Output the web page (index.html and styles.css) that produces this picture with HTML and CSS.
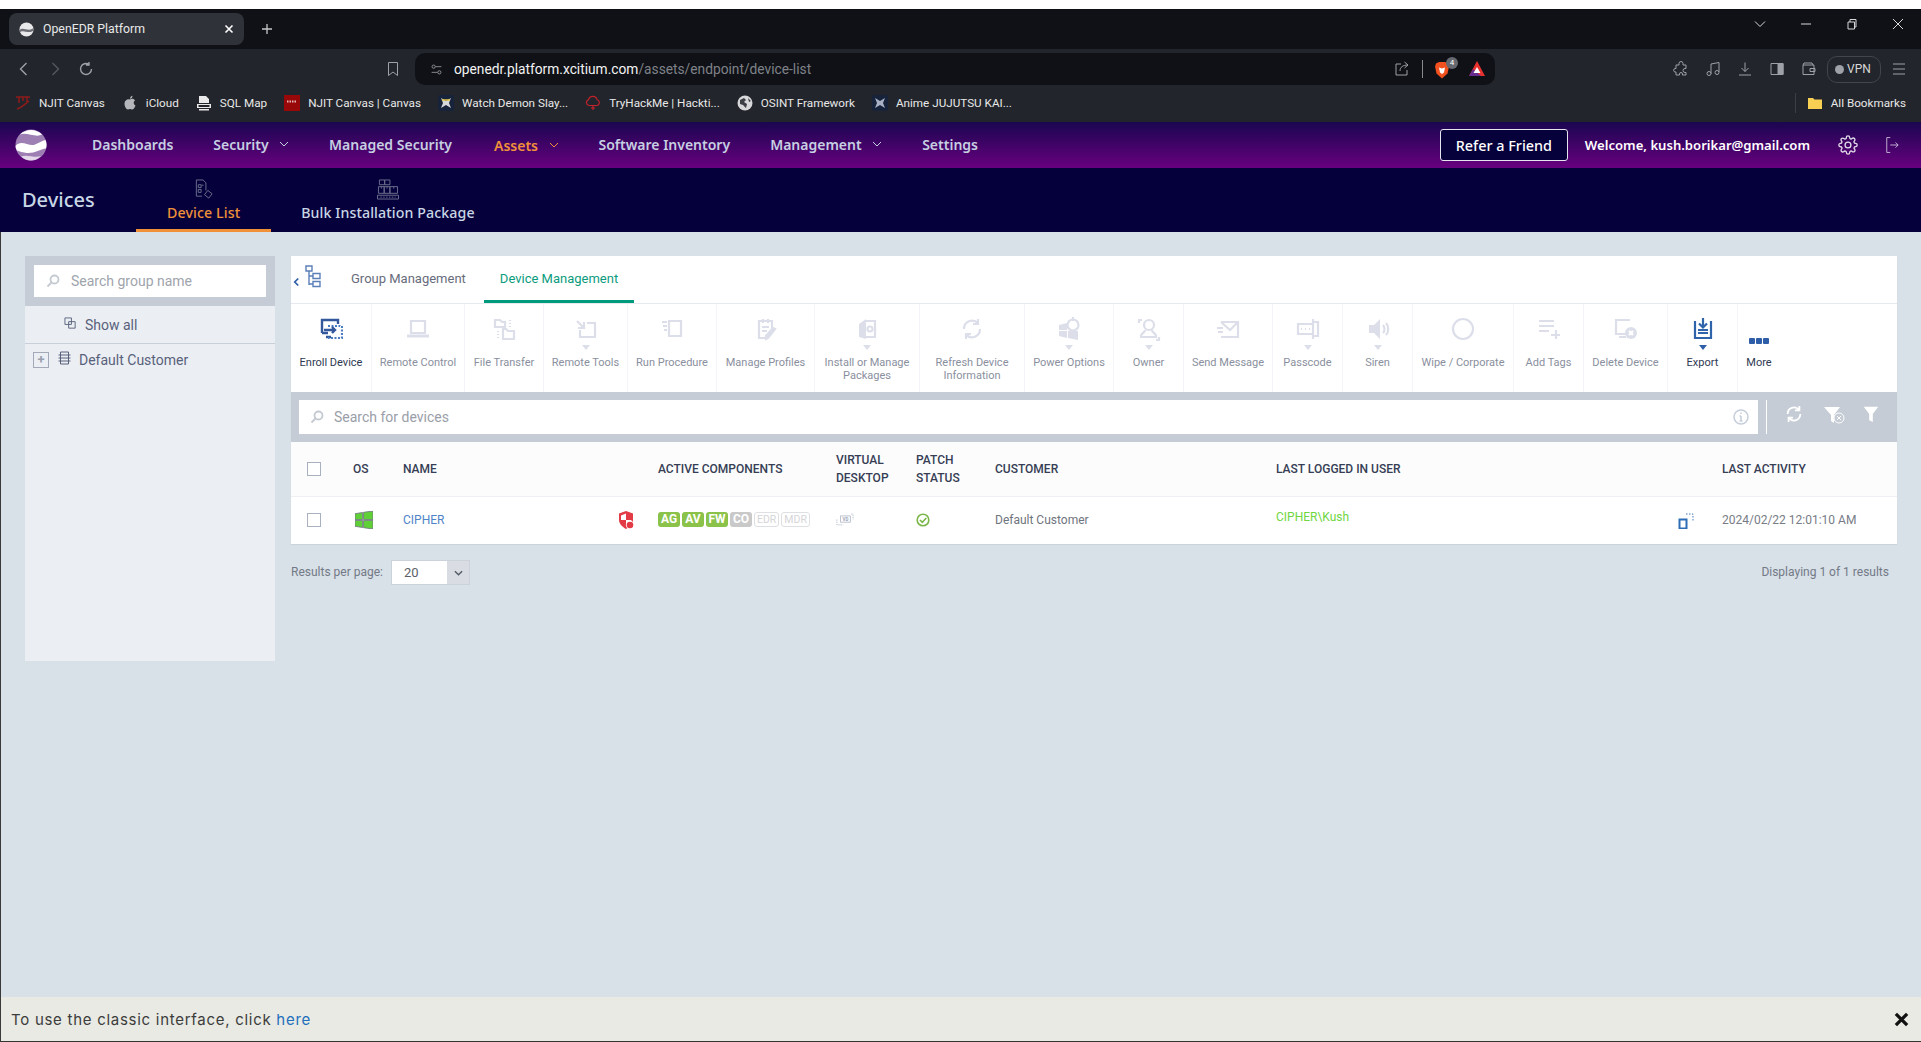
FILE: index.html
```html
<!DOCTYPE html>
<html lang="en">
<head>
  <meta charset="UTF-8">
  <title>OpenEDR Platform</title>
  <link rel="stylesheet" href="styles.css">
</head>
<body>
  <div class="top-strip"></div>

  <div class="tab-strip">
    <div class="browser-tab">
      <svg class="favicon" viewBox="0 0 32 32"><circle cx="16" cy="16" r="15" fill="#e8e8ea"/><path d="M1 17C9 9 20 22 31 13v5C21 27 9 15 2 22z" fill="#6d6d75"/></svg>
      <span class="browser-tab-title">OpenEDR Platform</span>
      <svg class="tab-close" viewBox="0 0 10 10"><path d="M1.500 1.500l7 7M8.500 1.500l-7 7"/></svg>
    </div>
    <svg class="new-tab" viewBox="0 0 12 12"><path d="M6 1v10M1 6h10"/></svg>
    <div class="window-controls">
      <svg viewBox="0 0 12 12"><path d="M1 3.500l5 5 5-5"/></svg>
      <svg viewBox="0 0 12 12"><path d="M1 6h10"/></svg>
      <svg viewBox="0 0 12 12"><path d="M2 4h6.500v7H2zM4 4V1.500h6V9H8.500"/></svg>
      <svg viewBox="0 0 12 12"><path d="M1 1l10 10M11 1L1 11"/></svg>
    </div>
  </div>

  <div class="address-row">
    <div class="nav-buttons">
      <svg viewBox="0 0 16 16"><path d="M10.500 2L4.500 8l6 6"/></svg>
      <svg class="dim" viewBox="0 0 16 16"><path d="M5.500 2l6 6-6 6"/></svg>
      <svg viewBox="0 0 16 16"><path d="M13.500 8A5.500 5.500 0 1 1 11 3.400M11 1v3h-3"/></svg>
    </div>
    <svg class="bookmark-btn" viewBox="0 0 16 16"><path d="M3.500 1.500h9v13L8 11l-4.500 3.500z"/></svg>
    <div class="address-bar">
      <svg class="site-settings" viewBox="0 0 16 16"><circle cx="4.500" cy="4.500" r="2"/><circle cx="11.500" cy="11.500" r="2"/><path d="M7 4.500h7M2 11.500h7"/></svg>
      <span class="url"><b>openedr.platform.xcitium.com</b>/assets/endpoint/device-list</span>
      <svg class="share" viewBox="0 0 16 16"><path d="M7 3H2v11h11V9M6 10c0-4 3-6 8-6M10.500 1l3.500 3-3.500 3"/></svg>
      <i class="address-sep"></i>
      <span class="brave">
        <svg viewBox="0 0 16 18"><path d="M2 2l3-1.500h6L14 2l1 3-1.500 7L8 17 2.500 12 1 5z" fill="#f1501f"/><path d="M5 6l3 1 3-1-1 5-2 1.500L6 11z" fill="#fff"/></svg>
        <span class="brave-count">4</span>
      </span>
      <svg class="rewards" viewBox="0 0 18 18"><path d="M9 1l8 15H1z" fill="#e8302f"/><path d="M1 16l4-7 8 7z" fill="#662d91"/><path d="M9 7l3.500 6h-7z" fill="#fff"/></svg>
    </div>
    <div class="toolbar-icons">
      <svg viewBox="0 0 16 16"><path d="M6 2.500a2 2 0 0 1 4 0V4h3v3.500h-1a1.500 1.500 0 0 0 0 4h1V14H9.500v-1a1.500 1.500 0 0 0-3 0v1H3v-3H2a1.800 1.800 0 0 1 0-3.500h1V4h3z"/></svg>
      <svg viewBox="0 0 16 16"><path d="M6 12.500V3l8-1.500v9.500"/><circle cx="4" cy="12.500" r="2"/><circle cx="12" cy="11.500" r="2"/></svg>
      <svg viewBox="0 0 16 16"><path d="M8 1.500v9M4.500 7L8 10.500 11.500 7M2 14h12"/></svg>
      <svg viewBox="0 0 16 16"><path d="M2 2.500h12v11H2z"/><path class="filled" d="M9 2.500h5v11H9z"/></svg>
      <svg viewBox="0 0 16 16"><path d="M2 4h11v9.500H2zM2 4l1-2h8l1 2M9 7.500h5v3H9z"/></svg>
      <span class="vpn-pill"><i></i>VPN</span>
      <svg viewBox="0 0 16 16"><path d="M2 3h12M2 8h12M2 13h12"/></svg>
    </div>
  </div>

  <div class="bookmarks-row">
    <span class="bookmark">
      <svg viewBox="0 0 16 16"><path d="M1 2h14M4 2v6M8 2v4M12 2v6M2 14C6 13 10 9 14 6" fill="none" stroke="#8e1b1b" stroke-width="1.500"/></svg>NJIT Canvas
    </span>
    <span class="bookmark">
      <svg viewBox="0 0 16 16"><path d="M8 4.500C9.500 3.500 12 3.500 13 5.500c-2 1.500-1.500 4 .5 5-1 2.500-2 4-3.500 4-1 0-1.200-.5-2-.5s-1.200.5-2 .5C4 14.500 2.500 11 2.500 8.500c0-3 3-5 5.500-4zM8 3.800C8 2 9.300 1 10.500.8 10.500 2.500 9.500 3.800 8 3.800z" fill="#b4b6bb"/></svg>iCloud
    </span>
    <span class="bookmark">
      <svg viewBox="0 0 16 16"><path d="M3 1h7l3 3v4H3zM1 9h14v4H1zM3 14h10v1.500H3z" fill="#e9e9e9"/><rect x="2.500" y="10" width="11" height="2" fill="#22252b"/></svg>SQL Map
    </span>
    <span class="bookmark">
      <svg viewBox="0 0 16 16"><rect width="16" height="16" fill="#980808"/><path d="M3 6.500h10" stroke="#e8b7b7" stroke-width="2" stroke-dasharray="1.500 1"/></svg>NJIT Canvas | Canvas
    </span>
    <span class="bookmark">
      <svg viewBox="0 0 16 16"><rect width="16" height="16" rx="2" fill="#16233a"/><path d="M3 3l5 3 5-3-2 5 2 5-5-3-5 3 2-5z" fill="#d6d8dc"/><path d="M4 5h8" stroke="#e3c84a" stroke-width="1.500"/></svg>Watch Demon Slay...
    </span>
    <span class="bookmark">
      <svg viewBox="0 0 16 16"><path d="M4 10.500a3 3 0 0 1-.500-5.800 4.500 4.500 0 0 1 8.700 0 3 3 0 0 1-.200 5.800zM6 13h4M8 11v4" fill="none" stroke="#c5222a" stroke-width="1.200"/></svg>TryHackMe | Hackti...
    </span>
    <span class="bookmark">
      <svg viewBox="0 0 16 16"><circle cx="8" cy="8" r="7.500" fill="#d6d8da"/><path d="M3 5l4-2 2 2-2 2 3 2-1 4-3-3-3-1zM11 3l3 3-2 1z" fill="#3c4045"/></svg>OSINT Framework
    </span>
    <span class="bookmark">
      <svg viewBox="0 0 16 16"><rect width="16" height="16" rx="2" fill="#16233a"/><path d="M3 3l5 3 5-3-2 5 2 5-5-3-5 3 2-5z" fill="#a9b2c4"/></svg>Anime JUJUTSU KAI...
    </span>
    <span class="all-bookmarks">
      <svg viewBox="0 0 16 16"><path d="M1 3h5l1.500 1.500H15V14H1z" fill="#f7cf52"/></svg>All Bookmarks
    </span>
  </div>

  <header class="app-nav">
    <svg class="app-logo" viewBox="0 0 32 32">
      <circle cx="16" cy="16" r="15.500" fill="#9d7fb4"/>
      <path d="M5 5.500C11-.5 21-.5 27 5.500 21 9 12 3 5 5.500z" fill="#fff"/>
      <path d="M.5 17C6 10 14 18 20 15.500c4-1.500 7-4 10.500-4.500 1.300 3 1.300 6 .5 8.500-6 .5-11 5-19 4.500-4-.3-7.500-1.500-10-2.500C1 20 .5 18.500.5 17z" fill="#fff"/>
      <path d="M6 27.500c6-2.500 14 2 20-.5-6 6-14 6-20 .5z" fill="#e4d8ea"/>
    </svg>
    <nav class="main-menu">
      <a>Dashboards</a>
      <a>Security <svg viewBox="0 0 10 6"><path d="M1 1l4 4 4-4"/></svg></a>
      <a>Managed Security</a>
      <a class="active">Assets <svg viewBox="0 0 10 6"><path d="M1 1l4 4 4-4"/></svg></a>
      <a>Software Inventory</a>
      <a>Management <svg viewBox="0 0 10 6"><path d="M1 1l4 4 4-4"/></svg></a>
      <a>Settings</a>
    </nav>
    <button class="refer-btn">Refer a Friend</button>
    <span class="welcome">Welcome, kush.borikar@gmail.com</span>
    <svg class="gear" viewBox="0 0 24 24"><circle cx="12" cy="12" r="3.500"/><path d="M19.400 15a1.650 1.650 0 0 0 .33 1.820l.06.06a2 2 0 0 1 0 2.830 2 2 0 0 1-2.830 0l-.06-.06a1.650 1.650 0 0 0-1.820-.33 1.650 1.650 0 0 0-1 1.510V21a2 2 0 0 1-2 2 2 2 0 0 1-2-2v-.09A1.650 1.650 0 0 0 9 19.400a1.650 1.650 0 0 0-1.820.33l-.06.06a2 2 0 0 1-2.830 0 2 2 0 0 1 0-2.830l.06-.06a1.650 1.650 0 0 0 .33-1.820 1.650 1.650 0 0 0-1.510-1H3a2 2 0 0 1-2-2 2 2 0 0 1 2-2h.09A1.650 1.650 0 0 0 4.600 9a1.650 1.650 0 0 0-.33-1.820l-.06-.06a2 2 0 0 1 0-2.830 2 2 0 0 1 2.830 0l.06.06a1.650 1.650 0 0 0 1.820.33H9a1.650 1.650 0 0 0 1-1.510V3a2 2 0 0 1 2-2 2 2 0 0 1 2 2v.09a1.650 1.650 0 0 0 1 1.510 1.650 1.650 0 0 0 1.820-.33l.06-.06a2 2 0 0 1 2.830 0 2 2 0 0 1 0 2.830l-.06.06a1.650 1.650 0 0 0-.33 1.820V9a1.650 1.650 0 0 0 1.510 1H21a2 2 0 0 1 2 2 2 2 0 0 1-2 2h-.09a1.650 1.650 0 0 0-1.510 1z"/></svg>
    <svg class="logout" viewBox="0 0 16 20"><path d="M6 1.500H2v17h4M6 10h9M12 7l3 3-3 3"/></svg>
  </header>

  <div class="sub-nav">
    <h1 class="page-title">Devices</h1>
    <a class="sub-tab current">
      <svg viewBox="0 0 20 22"><path d="M2 1h7l3 3v8M2 1v17h6M4 6h3v3H4zM7.500 6.500h2M4 11h3v3H4z"/><path d="M14 12l4.500 3.500-3.500 4.500-4.500-3.500z"/></svg>
      <span>Device List</span>
    </a>
    <a class="sub-tab">
      <svg class="wide" viewBox="0 0 24 22"><path d="M3 1h5.500v5H3zM8.500 1H14v5H8.500zM2 8h6v7H2zM8 8h6v7H8zM14 8h8v7h-8zM5 8v2M11 8v2M18 8v2M1 17h22v4H1z"/><path d="M4 19h16" stroke-dasharray="1.500 1.500"/></svg>
      <span>Bulk Installation Package</span>
    </a>
  </div>

  <main class="content">
    <aside class="group-panel">
      <div class="group-search">
        <label class="search-field">
          <svg class="search-icon" viewBox="0 0 14 14"><circle cx="8.500" cy="5.500" r="4"/><path d="M5.500 8.500L1.500 12.500"/></svg>
          <span>Search group name</span>
        </label>
      </div>
      <div class="show-all">
        <svg viewBox="0 0 14 14"><path d="M1 1h7v7H1zM5 5h7v7H5z"/></svg>
        <span>Show all</span>
      </div>
      <div class="tree-row">
        <span class="expander">+</span>
        <svg viewBox="0 0 14 14"><path d="M3 1h8v12H3zM1 4h12M1 7h12M1 10h12" /></svg>
        <span>Default Customer</span>
      </div>
    </aside>

    <section class="device-area">
      <div class="device-panel">
        <div class="panel-tabs">
          <svg class="collapse" viewBox="0 0 8 12"><path d="M6 2L2 6l4 4"/></svg>
          <svg class="tree-icon" viewBox="0 0 16 23"><path d="M1 1h6v5H1zM4 6v14M4 11h4M4 19h4M8 8.500h7v5H8zM8 16.500h7v5H8z"/></svg>
          <a class="panel-tab">Group Management</a>
          <a class="panel-tab selected">Device Management</a>
        </div>

        <div class="actions">
          <div class="action ready">
            <svg viewBox="0 0 24 24"><path class="navy" d="M3 16V3h16v4M7 20h5M3 16h6"/><path class="dots" d="M9 9h14v12H9"/><path class="navy" d="M5 13h11M13 10l3 3-3 3"/></svg>
            <span>Enroll Device</span>
          </div>
          <div class="action">
            <svg viewBox="0 0 24 24"><path d="M5 4h14v12H5z"/><path class="thick" d="M1 19h22"/></svg>
            <span>Remote Control</span>
          </div>
          <div class="action">
            <svg viewBox="0 0 24 24"><path d="M3 3h5l2 2h3v5H3zM11 12h3l2 2h6v8H11zM6 14v1M6 17v1M6 20v1M18 3v1M18 6v1M18 9v1"/></svg>
            <span>File Transfer</span>
          </div>
          <div class="action caret">
            <svg viewBox="0 0 24 24"><path d="M13 6h8v14H6v-7M3 4l7 7M10 5v6H4"/></svg>
            <span>Remote Tools</span>
          </div>
          <div class="action">
            <svg viewBox="0 0 24 24"><path d="M9 4h12v15H9zM2 5h5M3 9h4M4 13h3"/></svg>
            <span>Run Procedure</span>
          </div>
          <div class="action">
            <svg viewBox="0 0 24 24"><path d="M5 4h13v9l-6 8H5zM9 2v4M14 2v4M8 10h7M8 14h5M21 12l-7 9-2 1 0-3 7-8z"/></svg>
            <span>Manage Profiles</span>
          </div>
          <div class="action caret">
            <svg viewBox="0 0 24 24"><path class="solid" d="M4 7l7-5v20l-7-2z"/><path d="M11 4h9v16h-9"/><circle cx="15" cy="12" r="2.500"/></svg>
            <span>Install or Manage Packages</span>
          </div>
          <div class="action">
            <svg viewBox="0 0 24 24"><path d="M20 12a8 8 0 0 1-14 5.500M4 12a8 8 0 0 1 14-5.500M18 2v5h-5M6 22v-5h5"/></svg>
            <span>Refresh Device Information</span>
          </div>
          <div class="action caret">
            <svg viewBox="0 0 24 24"><path class="solid" d="M2 8l8-2v7H2zM2 14h8v7l-8-2zM11 14h10v9l-10-2z"/><circle cx="16" cy="8" r="5.500"/><path d="M16 0v4"/></svg>
            <span>Power Options</span>
          </div>
          <div class="action caret">
            <svg viewBox="0 0 24 24"><circle cx="12" cy="8" r="5"/><path d="M8 13c0 3-4 3-4 6v1h15v-1c0-3-4-3-4-6M2 6V3h3M19 23h3v-3"/></svg>
            <span>Owner</span>
          </div>
          <div class="action">
            <svg viewBox="0 0 24 24"><path d="M5 5h17v15H5M5 5l9 8 8-8M1 11h6M2 15h5"/></svg>
            <span>Send Message</span>
          </div>
          <div class="action caret">
            <svg viewBox="0 0 24 24"><path d="M2 7h15v10H2zM17 2v20M17 5h5v14h-5M5 12h1M9 12h1M13 12h1"/></svg>
            <span>Passcode</span>
          </div>
          <div class="action caret">
            <svg viewBox="0 0 24 24"><path class="solid" d="M3 8h5l6-6v20l-6-6H3z"/><path d="M17 8c2 2 2 6 0 8M20 6c3 3 3 9 0 12"/></svg>
            <span>Siren</span>
          </div>
          <div class="action">
            <svg viewBox="0 0 24 24"><circle cx="12" cy="12" r="10"/></svg>
            <span>Wipe / Corporate</span>
          </div>
          <div class="action">
            <svg viewBox="0 0 24 24"><path d="M2 4h15M2 9h15M2 14h10M19 13v9M14 18h9"/></svg>
            <span>Add Tags</span>
          </div>
          <div class="action">
            <svg viewBox="0 0 24 24"><path d="M16 3H2v14h12M5 20h7"/><circle class="solid" cx="17" cy="16" r="6"/><path class="white" d="M15 14l4 4M19 14l-4 4"/></svg>
            <span>Delete Device</span>
          </div>
          <div class="action ready caret">
            <svg viewBox="0 0 24 24"><path class="blue" d="M12 1v9M8 6.500l4 4 4-4M7 13h10M7 16h10"/><path class="blue" d="M4 4v17h16V4"/></svg>
            <span>Export</span>
          </div>
          <div class="action ready more">
            <div class="more-dots"><i></i><i></i><i></i></div>
            <span>More</span>
          </div>
        </div>

        <div class="search-band">
          <label class="device-search">
            <svg class="search-icon" viewBox="0 0 14 14"><circle cx="8.500" cy="5.500" r="4"/><path d="M5.500 8.500L1.500 12.500"/></svg>
            <span>Search for devices</span>
            <svg class="info-icon" viewBox="0 0 16 16"><circle cx="8" cy="8" r="7"/><path d="M8 7v5M6.500 12h3M6.500 7H8M8 3.500v1.500"/></svg>
          </label>
          <div class="band-tools">
            <svg viewBox="0 0 20 20"><path d="M17 10a7 7 0 0 1-12.500 4.500M3 10a7 7 0 0 1 12.500-4.500M16 1v5h-5M4 19v-5h5"/></svg>
            <svg class="wide-tool" viewBox="0 0 22 20"><path class="fill-white" d="M1 2h16l-6 8v8l-3-2v-6z"/><circle class="cutout" cx="16" cy="13" r="5"/><path class="x-mark" d="M14 11l4 4M18 11l-4 4"/></svg>
            <svg viewBox="0 0 18 20"><path class="fill-white" d="M1 2h16l-6 8v9l-4-2v-7z"/></svg>
          </div>
        </div>

        <div class="device-table">
          <div class="table-head">
            <span class="check"></span>
            <span>OS</span>
            <span>NAME</span>
            <span></span>
            <span>ACTIVE COMPONENTS</span>
            <span>VIRTUAL DESKTOP</span>
            <span>PATCH STATUS</span>
            <span>CUSTOMER</span>
            <span>LAST LOGGED IN USER</span>
            <span></span>
            <span>LAST ACTIVITY</span>
          </div>
          <div class="table-row">
            <span class="check"></span>
            <svg class="os-icon" viewBox="0 0 20 20"><path d="M0 3l8.500-1.300V9.500H0zM9.500 1.500L20 0v9.500H9.500zM0 10.500h8.500v7.800L0 17zM9.500 10.500H20V20L9.500 18.500z" fill="#5fd136"/></svg>
            <a class="device-name">CIPHER</a>
            <svg class="shield" viewBox="0 0 16 18"><path d="M1 2.500L8 0l7 2.500V9c0 4-3.500 7-7 9-3.500-2-7-5-7-9z" fill="#e23b45"/><path d="M8 2.500L3 4.500V9h5zM8 9h5.500c0 1-.3 2-.8 3L8 14z" fill="#fff"/><circle cx="12" cy="14" r="4.200" fill="#fff"/><circle cx="12" cy="14" r="3.300" fill="#e23b45"/></svg>
            <div class="badges">
              <b>AG</b><b>AV</b><b>FW</b><b class="grey">CO</b><b class="off">EDR</b><b class="off">MDR</b>
            </div>
            <svg class="vd-icon" viewBox="0 0 20 14"><path d="M5 3h11v7H5z"/><path class="dotted" d="M1 7v6h7M17 1h2v6"/><text class="vd-text" x="10.500" y="8.500">VD</text></svg>
            <svg class="patch-icon" viewBox="0 0 14 14"><circle cx="7" cy="7" r="5.800"/><path d="M4 7l2.300 2.300L10.300 5"/></svg>
            <span class="customer">Default Customer</span>
            <span class="last-user">CIPHER\Kush</span>
            <svg class="mobile-icon" viewBox="0 0 16 16"><path class="dash" d="M8 1h7v7"/><path class="phone" d="M1.500 6.500h7v9h-7z"/></svg>
            <span class="last-activity">2024/02/22 12:01:10 AM</span>
          </div>
        </div>
      </div>

      <div class="results-row">
        <span class="results-text">Results per page:</span>
        <div class="page-select">
          <span>20</span>
          <i><svg viewBox="0 0 10 6"><path d="M1 1l4 4 4-4"/></svg></i>
        </div>
        <span class="results-text displaying">Displaying 1 of 1 results</span>
      </div>
    </section>
  </main>

  <footer class="classic-bar">
    <span>To use the classic interface, click <a>here</a></span>
    <svg viewBox="0 0 12 12"><path d="M1.500 1.500l9 9M10.500 1.500l-9 9"/></svg>
  </footer>
</body>
</html>
```

FILE: styles.css
```css
* {
    box-sizing: border-box;
}

html, body {
    height: 100%;
}

body {
    margin: 0;
    display: flex;
    flex-direction: column;
    height: 1042px;
    overflow: hidden;
    font-family: Roboto, sans-serif;
    background: #d8e0e8;
    color: #333;
}

svg {
    display: block;
    flex: none;
    fill: none;
    stroke: currentColor;
}

.top-strip {
    height: 9px;
    background: #fff;
}

/* browser chrome */
.tab-strip {
    height: 40px;
    display: flex;
    align-items: flex-start;
    background: #0f1116;
    padding: 4px 0 0 9px;
}

.browser-tab {
    width: 235px;
    height: 32px;
    border-radius: 8px;
    background: #2f3339;
    color: #e8e8e8;
    display: flex;
    align-items: center;
    padding: 0 10px;
    font-size: 12.3px;
}

.favicon {
    width: 15px;
    height: 15px;
    stroke: none;
}

.browser-tab-title {
    margin-left: 9px;
    flex: 1;
}

.tab-close {
    width: 10px;
    height: 10px;
    stroke-width: 1.6;
    color: #fff;
}

.new-tab {
    width: 12px;
    height: 12px;
    margin: 10px 0 0 17px;
    color: #c8c8c8;
    stroke-width: 1.3;
}

.window-controls {
    margin-left: auto;
    display: flex;
    gap: 34px;
    padding: 5px 17px 0 0;
    color: #d8d8d8;
}

.window-controls svg {
    width: 12px;
    height: 12px;
}

.address-row {
    height: 40px;
    background: #22252b;
    display: flex;
    align-items: center;
    padding-left: 16px;
    color: #9ea1a7;
}

.nav-buttons {
    display: flex;
    gap: 15px;
}

.nav-buttons svg {
    width: 16px;
    height: 16px;
    stroke-width: 1.4;
}

.nav-buttons .dim {
    color: #55585e;
}

.bookmark-btn {
    width: 16px;
    height: 16px;
    margin-left: 291px;
}

.address-bar {
    width: 1080px;
    height: 32px;
    margin-left: 14px;
    border-radius: 10px;
    background: #0f1116;
    display: flex;
    align-items: center;
    padding: 0 9px 0 15px;
}

.site-settings {
    width: 13px;
    height: 13px;
}

.url {
    margin-left: 11px;
    font-size: 13.75px;
    color: #7f8288;
    flex: 1;
}

.url b {
    font-weight: 400;
    color: #f2f2f2;
}

.share {
    width: 16px;
    height: 16px;
}

.address-sep {
    width: 1px;
    height: 18px;
    margin-left: 12px;
    background: #8a8a8a;
}

.brave {
    width: 22px;
    height: 22px;
    margin-left: 11px;
    position: relative;
}

.brave svg {
    width: 16px;
    height: 19px;
    margin-top: 3px;
    stroke: none;
}

.brave-count {
    position: absolute;
    top: -1px;
    right: -2px;
    width: 12px;
    height: 12px;
    border-radius: 50%;
    background: #666a70;
    color: #fff;
    font-size: 8px;
    line-height: 12px;
    text-align: center;
}

.rewards {
    width: 18px;
    height: 18px;
    margin-left: 12px;
    stroke: none;
}

.toolbar-icons {
    display: flex;
    align-items: center;
    gap: 16px;
    margin-left: 178px;
}

.toolbar-icons svg {
    width: 16px;
    height: 16px;
}

.toolbar-icons .filled {
    fill: currentColor;
}

.vpn-pill {
    width: 54px;
    height: 27px;
    margin: 0 -6px 0 -6px;
    border: 1px solid #41454c;
    border-radius: 10px;
    color: #d8d8d8;
    font-size: 12px;
    display: flex;
    align-items: center;
    gap: 3px;
    padding-left: 7px;
}

.vpn-pill i {
    width: 9px;
    height: 9px;
    border-radius: 50%;
    background: #9ea1a7;
}

.bookmarks-row {
    height: 33px;
    background: #22252b;
    display: flex;
    align-items: center;
    padding: 0 0 5px 15px;
    gap: 17px;
    color: #e8e8e8;
    font-size: 11.7px;
}

.bookmark {
    display: flex;
    align-items: center;
    gap: 8px;
    white-space: nowrap;
}

.bookmark svg, .all-bookmarks svg {
    width: 16px;
    height: 16px;
    stroke: none;
}

.all-bookmarks {
    margin-left: auto;
    display: flex;
    align-items: center;
    gap: 8px;
    padding: 2px 15px 2px 11px;
    border-left: 1px solid #3b3e44;
}

/* app header */
.app-nav {
    height: 46px;
    background: linear-gradient(#1a0650, #68007f);
    display: flex;
    align-items: center;
    padding: 0 22px 0 15px;
    color: #fff;
}

.app-logo {
    width: 32px;
    height: 32px;
    stroke: none;
}

.main-menu {
    display: flex;
    align-items: center;
    gap: 40px;
    margin-left: 45px;
    padding-bottom: 2px;
    flex: 1;
}

.main-menu a {
    display: flex;
    align-items: center;
    gap: 10.5px;
    font-family: "Noto Sans", sans-serif;
    font-size: 14px;
    font-weight: 600;
    color: #c7cfe2;
}

.main-menu a.active {
    color: #f0913a;
    margin-left: 2px;
    padding-top: 2px;
}

.main-menu svg {
    width: 10px;
    height: 6px;
}

.refer-btn {
    width: 128px;
    height: 32px;
    background: #06003b;
    color: #fff;
    border: 1px solid #e4e4ee;
    border-radius: 3px;
    font-family: "Noto Sans", sans-serif;
    font-size: 14.4px;
    font-weight: 500;
    padding: 0;
}

.welcome {
    margin-left: 17px;
    font-family: "Noto Sans", sans-serif;
    font-size: 13.1px;
    font-weight: 600;
}

.gear {
    width: 20px;
    height: 20px;
    margin-left: 28px;
    color: #e3dce9;
    stroke-width: 1.6;
}

.logout {
    width: 14px;
    height: 18px;
    margin-left: 27px;
    color: #cfc3dd;
}

.sub-nav {
    height: 64px;
    background: #05003c;
    display: flex;
    padding-left: 22px;
}

.page-title {
    width: 114px;
    margin: 0;
    padding-top: 19px;
    font-family: "Noto Sans", sans-serif;
    font-size: 20px;
    font-weight: 500;
    line-height: 26px;
    color: #c8d6e5;
}

.sub-tab {
    height: 64px;
    padding: 11px 31px 0;
    display: flex;
    flex-direction: column;
    align-items: center;
    font-family: "Noto Sans", sans-serif;
    font-size: 14.2px;
    font-weight: 500;
    letter-spacing: .1px;
    color: #c8d6e5;
    border-bottom: 3px solid transparent;
}

.sub-tab svg {
    width: 20px;
    height: 21px;
    color: #6c6f8c;
}

.sub-tab svg.wide {
    width: 24px;
}

.sub-tab span {
    margin-top: 3px;
}

.sub-tab.current {
    color: #f0913a;
    border-bottom-color: #f0913a;
}

.sub-tab + .sub-tab {
    padding: 11px 30px 0;
}

/* main content */
.content {
    flex: 1;
    display: flex;
    gap: 16px;
    padding: 24px 24px 0 24px;
    border-left: 1px solid #3a3a3a;
}

.group-panel {
    width: 250px;
    height: 405px;
    background: #ebeff4;
    font-size: 14px;
    color: #59617a;
}

.group-search {
    height: 50px;
    padding: 9px;
    background: #c5ccd5;
}

.search-field {
    height: 32px;
    background: #fff;
    display: flex;
    align-items: center;
    gap: 11px;
    padding-left: 12px;
    color: #a0a4ac;
}

.search-icon {
    width: 14px;
    height: 14px;
    color: #c5cad2;
    stroke-width: 1.8;
}

.show-all {
    height: 38px;
    border-bottom: 1px solid #c9cfd9;
    display: flex;
    align-items: center;
    gap: 8px;
    padding-left: 39px;
}

.show-all svg {
    width: 13px;
    height: 13px;
    margin-top: -3px;
}

.tree-row {
    display: flex;
    align-items: center;
    padding: 8px 0 0 8px;
}

.expander {
    width: 16px;
    height: 16px;
    border: 1px solid #a3a9b8;
    color: #9aa1b0;
    font-size: 13px;
    font-weight: 700;
    line-height: 14px;
    text-align: center;
}

.tree-row svg {
    width: 15px;
    height: 14px;
    margin: -5px 7px 0 8px;
}

.device-area {
    flex: 1;
    min-width: 0;
}

.device-panel {
    background: #fff;
    box-shadow: 0 1px 1px #ccd3dc;
}

.panel-tabs {
    height: 48px;
    border-bottom: 1px solid #e6e9ee;
    display: flex;
    padding-left: 2px;
    font-size: 13px;
    color: #676c7c;
}

.collapse {
    width: 7px;
    height: 12px;
    margin-top: 20px;
    color: #2f5ea8;
    stroke-width: 2;
}

.tree-icon {
    width: 16px;
    height: 23px;
    margin: 9px 0 0 5px;
    color: #5b7fb8;
    stroke-width: 1.4;
}

.panel-tab {
    height: 47px;
    padding: 15px 16px 0;
    border-bottom: 3px solid transparent;
}

.tree-icon + .panel-tab {
    margin-left: 14px;
    margin-right: 2px;
}

.panel-tab.selected {
    color: #0b9c7e;
    border-bottom-color: #009a7c;
}

.actions {
    height: 88px;
    display: grid;
    grid-template-columns: 81px 93px 79px 84px 89px 98px 105px 105px 89px 70px 89px 70px 70px 101px 70px 84px 70px 42px;
}

.action {
    display: flex;
    flex-direction: column;
    align-items: center;
    padding-top: 13px;
    border-right: 1px solid #f4f5f8;
    font-size: 11px;
    line-height: 13px;
    color: #8a8f9e;
    text-align: center;
    position: relative;
}

.action svg {
    width: 24px;
    height: 24px;
    color: #dcdfe9;
    stroke-width: 2.2;
}

.action span {
    margin-top: 15px;
    padding: 0 4px;
}

.action .solid {
    fill: #dcdfe9;
    stroke: none;
}

.action .thick {
    stroke-width: 3;
}

.action .white {
    stroke: #fff;
}

.action.caret::after {
    content: "";
    position: absolute;
    top: 41px;
    left: 50%;
    margin-left: -4px;
    border: 4px solid transparent;
    border-top: 5px solid #dcdfe9;
    border-bottom: 0;
}

.action.ready {
    color: #2f3a52;
}

.action.ready .navy {
    stroke: #35589c;
    stroke-width: 2.4;
}

.action.ready .dots {
    stroke: #4a7cc4;
    stroke-dasharray: 2 1.5;
}

.action.ready .blue {
    stroke: #2f64ab;
}

.action.ready.caret::after {
    border-top-color: #2f5ea8;
}

.action.more {
    border-right: 0;
}

.more-dots {
    height: 24px;
    display: flex;
    align-items: flex-end;
    gap: 1px;
    margin-top: 3px;
    margin-bottom: -3px;
}

.more-dots i {
    width: 6px;
    height: 6px;
    border-radius: 1px;
    background: #2f5ea8;
}

.search-band {
    height: 50px;
    background: #c5ccd5;
    padding: 8px;
    display: flex;
    gap: 8px;
}

.device-search {
    width: 1459px;
    height: 34px;
    background: #fff;
    display: flex;
    align-items: center;
    padding: 0 9px 0 11px;
    gap: 10px;
    font-size: 14px;
    color: #9a9ea8;
}

.device-search span {
    flex: 1;
}

.info-icon {
    width: 16px;
    height: 16px;
    color: #c6cedb;
    stroke-width: 1.5;
}

.band-tools {
    flex: 1;
    height: 34px;
    border-left: 1px solid #fff;
    display: flex;
    gap: 19px;
    padding: 5px 0 0 18px;
    color: #fff;
}

.band-tools svg {
    width: 18px;
    height: 18px;
    stroke-width: 2;
}

.band-tools svg.wide-tool {
    width: 22px;
    height: 20px;
    margin: 0 -2px 0 1px;
}

.band-tools .fill-white {
    fill: #fff;
    stroke: none;
}

.band-tools .cutout {
    fill: #c5ccd5;
    stroke: #fff;
    stroke-width: 1;
}

.band-tools .x-mark {
    stroke-width: 1;
}

.table-head, .table-row {
    display: grid;
    grid-template-columns: 54px 50px 215px 40px 178px 80px 79px 281px 402px 44px 183px;
    align-items: center;
}

.table-head {
    height: 55px;
    background: #fcfcfc;
    border-bottom: 1px solid #eef0f3;
    font-size: 12px;
    font-weight: 500;
    line-height: 18px;
    color: #363e55;
}

.table-head span:nth-child(6), .table-head span:nth-child(7) {
    width: 62px;
}

.table-head > span, .table-row > span, .table-row > a, .table-row > svg, .table-row > div {
    margin-left: 8px;
}

.table-row {
    height: 47px;
    padding-bottom: 2px;
    background: #fff;
    font-size: 12px;
    color: #777c86;
}

.table-head .check, .table-row .check {
    width: 14px;
    height: 14px;
    margin-left: 16px;
    border: 1px solid #a9b0bf;
    background: #fff;
}

.table-row .os-icon {
    width: 18px;
    height: 18px;
    margin-left: 10px;
}

.device-name {
    color: #4f84c8;
}

.shield {
    width: 16px;
    height: 18px;
    stroke: none;
}

.badges {
    display: flex;
    gap: 2px;
}

.badges b {
    min-width: 22px;
    height: 15px;
    padding: 0 2px;
    border-radius: 3px;
    background: #8bc34a;
    color: #fff;
    font-size: 12px;
    font-weight: 700;
    line-height: 15px;
    text-align: center;
}

.badges b.grey {
    background: #c9c9c9;
}

.badges b.off {
    padding: 0 2px;
    background: #fff;
    color: #d5d5d8;
    font-size: 10.5px;
    font-weight: 400;
    line-height: 13px;
    border: 1px solid #dedfe2;
}

.vd-icon {
    width: 18px;
    height: 13px;
    color: #b4bccb;
}

.vd-icon .dotted {
    stroke-dasharray: 1.500 1;
}

.vd-icon .vd-text {
    fill: #9aa4b8;
    stroke: none;
    font-size: 5px;
    font-weight: 700;
    text-anchor: middle;
}

.patch-icon {
    width: 14px;
    height: 14px;
    color: #7ab648;
    stroke-width: 1.6;
}

.customer {
    color: #6f747d;
}

.last-user {
    color: #6fd63f;
    margin-top: -5px;
}

.mobile-icon {
    width: 16px;
    height: 16px;
    margin-top: 3px;
}

.mobile-icon .dash {
    stroke: #3f78bd;
    stroke-dasharray: 1.500 1.500;
}

.mobile-icon .phone {
    stroke: #2c6db5;
    stroke-width: 2;
}

.results-row {
    display: flex;
    align-items: center;
    height: 25px;
    margin-top: 16px;
    font-size: 12px;
    color: #737a86;
}

.results-text {
    padding-bottom: 2px;
}

.page-select {
    width: 79px;
    height: 25px;
    margin-left: 8px;
    background: #fff;
    border: 1px solid #ccd2da;
    display: flex;
    align-items: center;
    justify-content: space-between;
    padding-left: 12px;
    font-size: 13px;
    color: #5a5f68;
}

.page-select i {
    width: 22px;
    height: 23px;
    background: #d9dde3;
    display: flex;
    align-items: center;
    justify-content: center;
    color: #555c68;
}

.page-select svg {
    width: 9px;
    height: 6px;
    stroke-width: 1.6;
}

.displaying {
    margin-left: auto;
    padding-right: 8px;
}

.classic-bar {
    height: 45px;
    background: #e8eae3;
    border-left: 1px solid #3a3a3a;
    border-bottom: 1px solid #333;
    display: flex;
    align-items: center;
    justify-content: space-between;
    padding: 0 12px 0 10px;
    font-family: Inter, sans-serif;
    font-size: 15px;
    letter-spacing: .72px;
    color: #3c3c3c;
}

.classic-bar a {
    color: #1f6fbd;
}

.classic-bar svg {
    width: 15px;
    height: 15px;
    stroke: #111;
    stroke-width: 2.6;
}
```
